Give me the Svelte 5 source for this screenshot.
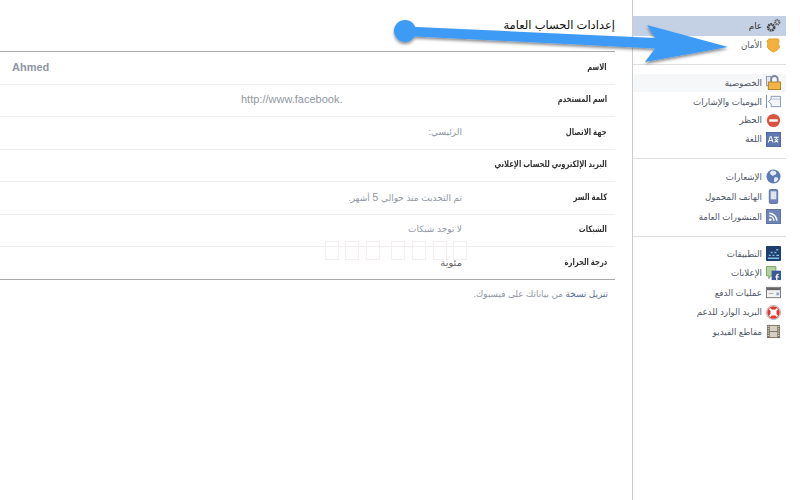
<script>
	const rows = [
		{ label: 'الاسم', value: 'Ahmed', cls: 'name' },
		{ label: 'اسم المستخدم', value: 'http://www.facebook.', cls: 'url' },
		{ label: 'جهة الاتصال', value: 'الرئيسي:', cls: '' },
		{ label: 'البريد الإلكتروني للحساب الإعلاني', value: '', cls: '' },
		{ label: 'كلمة السر', value: 'تم التحديث منذ حوالي', num: '5', after: 'أشهر.', cls: '' },
		{ label: 'الشبكات', value: 'لا توجد شبكات', cls: '' },
		{ label: 'درجة الحرارة', value: 'مئوية', cls: 'temp' }
	];
	const tofu = [325, 345, 366, 391, 412, 433, 453];
</script>

<div class="page" dir="rtl">
	<nav class="side">
		<ul class="group">
			<li class="selected">
				<svg viewBox="0 0 16 16"><circle cx="5.500" cy="10" r="3.200" fill="none" stroke="#444" stroke-width="2.800" stroke-dasharray="1.700 .6" /><circle cx="12" cy="4.500" r="2.300" fill="none" stroke="#666" stroke-width="2.200" stroke-dasharray="1.300 .5" /></svg>
				<span class="dark">عام</span>
			</li>
			<li>
				<svg viewBox="0 0 16 16"><path d="M3 1h10l1 2.500-1 2 1.500 4-2 3-4.500 2.500-4.500-2.500-2-3L2 5.500l-1-2z" fill="#f4b03c" stroke="#e3a02f" /></svg>
				<span>الأمان</span>
			</li>
		</ul>
		<ul class="group tight">
			<li class="hover">
				<svg viewBox="0 0 16 16"><rect x=".5" y="1.500" width="5" height="10" fill="#e4e8f0" stroke="#8d97ad" /><path d="M5.500 8V4.500a3.500 3.500 0 0 1 7 0V8" fill="none" stroke="#7d869c" stroke-width="2" /><rect x="2.500" y="7.500" width="13" height="8" fill="#f2b544" stroke="#a97f2a" /></svg>
				<span>الخصوصية</span>
			</li>
			<li>
				<svg viewBox="0 0 16 16"><path d="M.5 1v14" stroke="#6d84b4" fill="none" /><path d="M2.500 8l3-2.500V2.500h10v11h-10v-3z" fill="#f3f5f9" stroke="#8393b3" /><path d="M5.500 5.500h10" stroke="#b5c0d4" /></svg>
				<span>اليوميات والإشارات</span>
			</li>
			<li>
				<svg viewBox="0 0 16 16"><circle cx="8" cy="8" r="7" fill="#d9533f" /><rect x="3.500" y="6.700" width="9" height="2.600" fill="#fff" /></svg>
				<span>الحظر</span>
			</li>
			<li>
				<svg viewBox="0 0 16 16"><rect x=".5" y=".5" width="15" height="15" fill="#5f78b0" stroke="#4d659c" /><path d="M2.500 11l2-6h1l2 6M3.500 9h3M8.500 5.500h5M11 5.500v2M9 11l4-3.500M9.500 7.500l3.500 3.500" fill="none" stroke="#fff" stroke-width="1.100" /></svg>
				<span>اللغة</span>
			</li>
		</ul>
		<ul class="group wide">
			<li>
				<svg viewBox="0 0 16 16"><circle cx="8" cy="8" r="7.500" fill="#5b7cb8" /><path d="M7 1.500c3 0 4 1 4 3S9 6 8 7 5.500 6 4.500 5 5 2 7 1.500zM9 9c2-.5 4 0 4 1.500S11 14 9.500 14 8.500 11 9 9z" fill="#e8edf5" /></svg>
				<span>الإشعارات</span>
			</li>
			<li>
				<svg viewBox="0 0 16 16"><rect x="3.500" y=".5" width="9" height="15" rx="1.500" fill="#6d84b4" stroke="#5a70a0" /><rect x="5" y="2.500" width="6" height="8.500" fill="#dfe5f0" /></svg>
				<span>الهاتف المحمول</span>
			</li>
			<li>
				<svg viewBox="0 0 16 16"><rect x=".5" y=".5" width="15" height="15" fill="#6d84b4" stroke="#5a70a0" /><circle cx="4.500" cy="11.500" r="1.400" fill="#fff" /><path d="M3.500 7.500a5 5 0 0 1 5 5M3.500 4.500a8 8 0 0 1 8 8" fill="none" stroke="#fff" stroke-width="1.500" /></svg>
				<span>المنشورات العامة</span>
			</li>
		</ul>
		<ul class="group">
			<li>
				<svg viewBox="0 0 16 16"><rect width="16" height="16" rx="1" fill="#1f3d6d" /><path d="M2 13h12M3 10h2M7 10h2M11 10h3M5 7h2M9 7h2M11 4h2" stroke="#7fc4ea" stroke-width="1.500" /></svg>
				<span>التطبيقات</span>
			</li>
			<li>
				<svg viewBox="0 0 16 16"><path d="M.5.500h10v10H5l-2 3v-3H.5z" fill="#b3d19c" stroke="#7ba264" /><rect x="6" y="5" width="10" height="10" fill="#3b5998" /><path d="M11.500 15V10.500a1.500 1.500 0 0 1 2-1.500M10 11.500h3.500" fill="none" stroke="#fff" stroke-width="1.400" /></svg>
				<span>الإعلانات</span>
			</li>
			<li>
				<svg viewBox="0 0 16 16"><rect x=".5" y="2.500" width="15" height="11" fill="#f2f2f2" stroke="#777" /><rect x="1" y="3" width="14" height="2.500" fill="#666" /><path d="M3 9h5" stroke="#aaa" /><rect x="11" y="8" width="3" height="3" fill="#8fa8d0" /></svg>
				<span>عمليات الدفع</span>
			</li>
			<li>
				<svg viewBox="0 0 16 16"><circle cx="8" cy="8" r="7.500" fill="#fff" stroke="#999" stroke-width=".8" /><circle cx="8" cy="8" r="5" fill="none" stroke="#e0392f" stroke-width="3.400" /><path d="M3.800 3.800l2.400 2.400M12.200 3.800L9.800 6.200M3.800 12.200l2.400-2.400M12.200 12.200L9.800 9.800" stroke="#fff" stroke-width="2" /></svg>
				<span>البريد الوارد للدعم</span>
			</li>
			<li>
				<svg viewBox="0 0 16 16"><rect x="1" y="1" width="14" height="14" fill="#7d7466" /><rect x="4" y="2" width="8" height="5.500" fill="#d5cfc3" /><rect x="4" y="8.500" width="8" height="5.500" fill="#d5cfc3" /><path d="M2.500 2v12M13.500 2v12" stroke="#d5cfc3" stroke-width="1.400" stroke-dasharray="1.200 1.200" /></svg>
				<span>مقاطع الفيديو</span>
			</li>
		</ul>
	</nav>

	<main class="content">
		<h1>إعدادات الحساب العامة</h1>
		<div class="table">
			{#each rows as row}
				<div class="row">
					<div class="label"><span>{row.label}</span></div>
					<div class="value {row.cls}">
						{row.value}
						{#if row.num}<span class="num">{row.num}</span> {row.after}{/if}
					</div>
				</div>
			{/each}
		</div>
		<p class="download"><span class="link">تنزيل نسخة</span> من بياناتك على فيسبوك.</p>
	</main>

	{#each tofu as x}
		<i class="tofu" style="left: {x}px"></i>
	{/each}

	<svg class="arrow" width="800" height="100" viewBox="0 0 800 100">
		<defs>
			<filter id="shadow" x="-5%" y="-20%" width="110%" height="150%">
				<feDropShadow dx="0" dy="2" stdDeviation="1.500" flood-color="#000" flood-opacity=".45" />
			</filter>
		</defs>
		<g filter="url(#shadow)" fill="#3d9bf5">
			<circle cx="405" cy="31" r="11" />
			<path d="M405 26.500L655 38 647 25 728 47 645 62 655 48.500 405 36z" />
		</g>
	</svg>
</div>

<style>
	:global(body) {
		background: #fff;
		overflow: hidden;
	}

	.page {
		position: relative;
		display: flex;
		width: 800px;
		height: 500px;
		overflow: hidden;
		font-family: "Liberation Sans", "DejaVu Sans", sans-serif;
		font-size: 8.700px;
		color: #4e5665;
	}

	.side {
		box-sizing: border-box;
		width: 168px;
		height: 500px;
		padding: 16px 14px 0 0;
		border-left: 1px solid #ccc;
		flex-shrink: 0;
	}

	.group {
		list-style: none;
		margin: 0 0 7.500px;
		padding: 0 0 9px;
		border-bottom: 1px solid #dfe0e3;
	}

	.group:first-child {
		margin-bottom: 8.500px;
	}

	.group:last-child {
		border-bottom: 0;
	}

	.group li {
		display: flex;
		align-items: center;
		gap: 4px;
		height: 19.500px;
		padding-right: 5px;
	}

	.group.tight {
		padding-bottom: 9.500px;
	}

	.group.tight li {
		height: 18.800px;
	}

	.group.wide li {
		height: 20px;
	}

	.group li svg {
		width: 15px;
		height: 15px;
		flex-shrink: 0;
	}

	.selected {
		background: #c4d0e4;
	}

	.hover {
		background: #f6f7f8;
	}

	.dark {
		color: #333;
	}

	.content {
		width: 615px;
		margin-right: 17px;
		flex-shrink: 0;
	}

	h1 {
		margin: 0;
		height: 52px;
		padding: 17px 0 0;
		box-sizing: border-box;
		font-size: 11.500px;
		font-weight: normal;
		line-height: 16px;
		color: #111;
		border-bottom: 1px solid #aaa;
	}

	.table {
		border-bottom: 1px solid #aaa;
	}

	.row {
		display: flex;
		align-items: center;
		box-sizing: border-box;
		height: 32.500px;
		padding: 0 8px 2px 0;
		border-bottom: 1px solid #eee;
	}

	.row:last-child {
		height: 32px;
		border-bottom: 0;
	}

	.label {
		width: 145px;
		flex-shrink: 0;
		font-size: 9px;
		font-weight: bold;
		color: #333;
		white-space: nowrap;
	}

	.label span {
		display: inline-block;
		transform: scaleX(0.76);
		transform-origin: right center;
	}

	.value {
		color: #9197a3;
		font-size: 9px;
		flex: 1;
	}

	.num {
		font-size: 11px;
	}

	.value.temp {
		color: #666;
		font-size: 10px;
	}

	.value.name {
		direction: ltr;
		padding-left: 12px;
		text-align: left;
		font-size: 11px;
		font-weight: bold;
	}

	.value.url {
		direction: ltr;
		text-align: left;
		padding-left: 241px;
		font-size: 11px;
	}

	.download {
		margin: 8.500px 7px 0 0;
		font-size: 8.900px;
		color: #9197a3;
	}

	.link {
		color: #5a6f9c;
	}

	.tofu {
		position: absolute;
		top: 241px;
		width: 12px;
		height: 17px;
		border: 1px solid #f5eeee;
	}

	.arrow {
		position: absolute;
		top: 0;
		left: 0;
		pointer-events: none;
	}
</style>
